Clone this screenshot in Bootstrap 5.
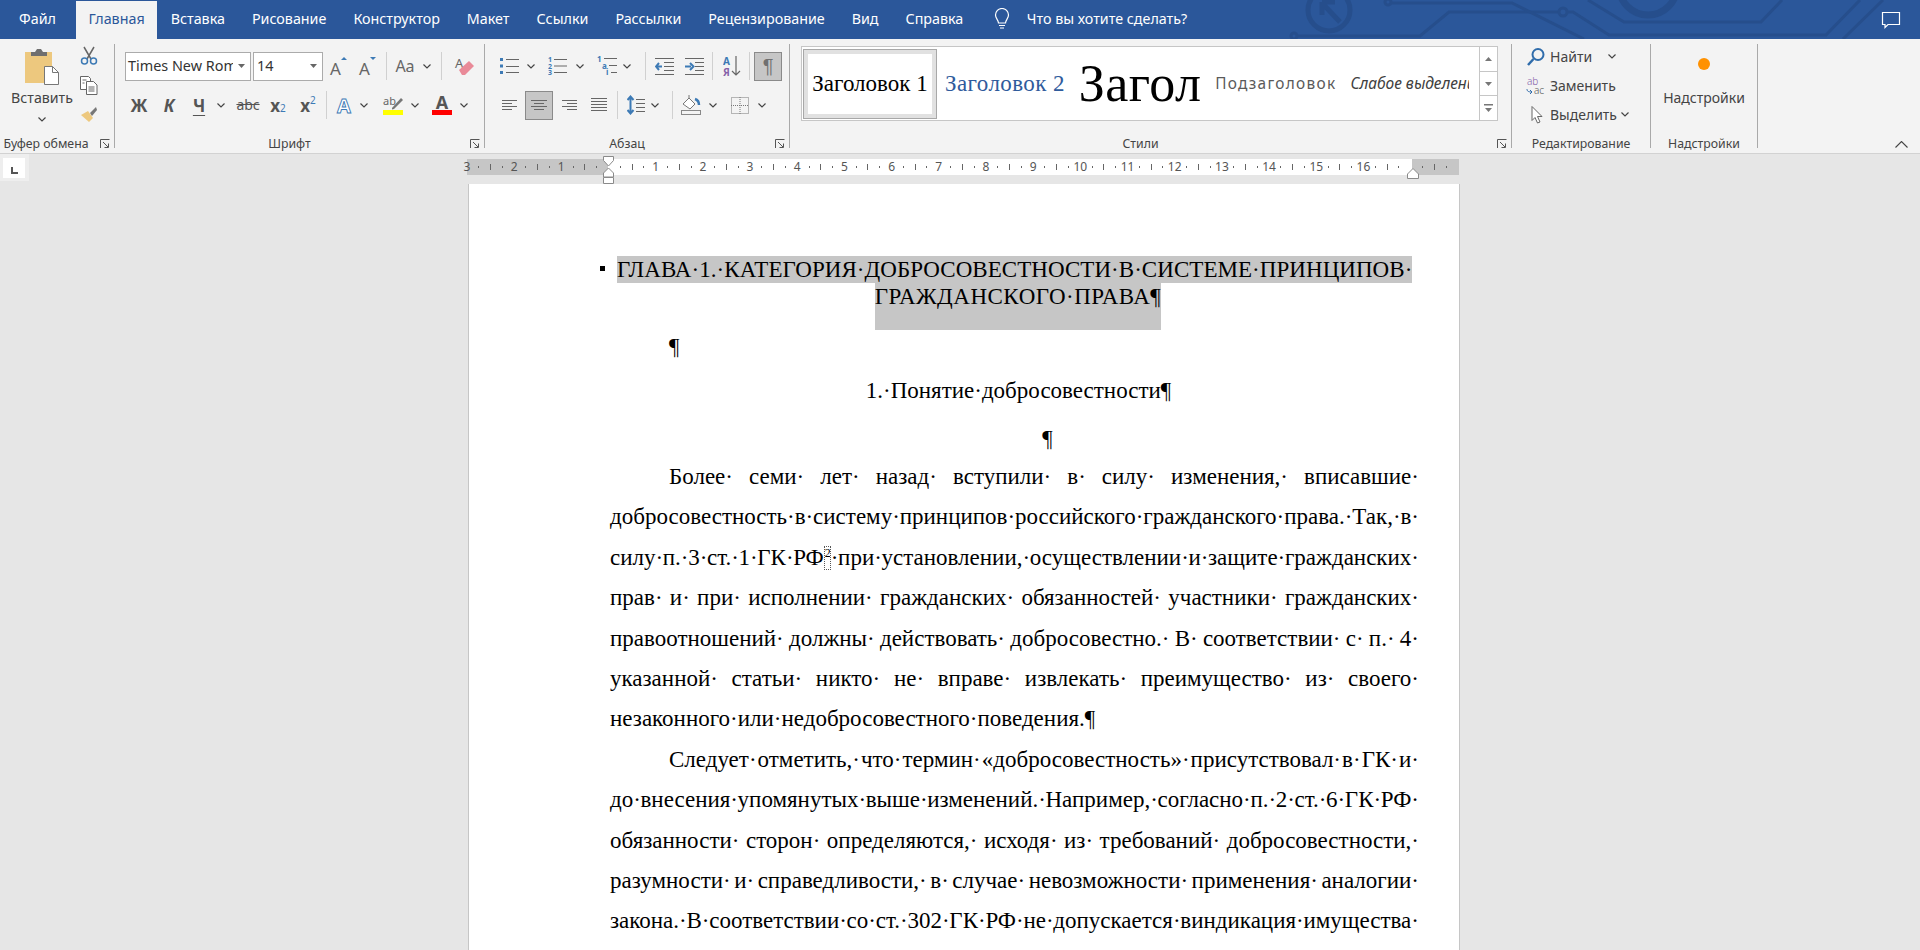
<!DOCTYPE html>
<html lang="ru">
<head>
  <meta charset="UTF-8">
  <title>Word</title>
  <link href="https://cdn.jsdelivr.net/npm/bootstrap@5.3.2/dist/css/bootstrap.min.css" rel="stylesheet">
  <style>
    html, body { height: 950px; overflow: hidden; }
    body { background: #e6e6e6; font-family: "Noto Sans", sans-serif; font-size: 12.3px; color: #444; }

    /* tabs */
    .tabbar { height: 39px; background: #2b579a; position: relative; color: #fff; font-size: 14.3px; overflow: hidden; }
    .circuit { position: absolute; left: 0; top: 0; }
    .tabbtn { position: relative; height: 38px; margin-top: 1px; padding: 0 13.5px; line-height: 36px; white-space: nowrap; }
    .tabbtn.first { padding-left: 19px; padding-right: 20px; }
    .tabbtn.on { background: #f3f3f3; color: #2b579a; padding: 0 12.5px; }
    .askbox { position: relative; line-height: 37px; white-space: nowrap; }
    .bubble { position: absolute; left: 1881px; top: 11px; }

    /* ribbon */
    .ribbon { height: 115px; background: #f3f3f3; border-bottom: 1px solid #d2d2d2; padding-top: 5px; position: relative; }
    .rgroup { height: 104px; border-right: 1px solid #a9a9a9; position: relative; flex: none; }
    .g-clip { width: 115px; } .g-font { width: 370px; } .g-para { width: 305px; }
    .g-style { width: 722px; } .g-edit { width: 139px; } .g-addin { width: 107px; }
    .rlabel { position: absolute; left: 0; right: 0; bottom: -5px; line-height: 18px; text-align: center; white-space: nowrap; }
    .rlabel.pad { padding-right: 20px; }
    .rlabel.pad-clip { padding-right: 22px; }
    .launch { position: absolute; right: 4px; top: 95px; }
    .rrow { height: 30px; display: flex; align-items: center; margin-bottom: 9px; }
    .rrows { padding-top: 7px; }
    .f-pad { padding-left: 9px; }
    .p-pad { padding-left: 9px; }
    .sl { flex: none; height: 30px; display: flex; align-items: center; justify-content: center; }
    .u1{width:1px}.u2{width:2px}.u3{width:3px}.u4{width:4px}.u5{width:5px}.u6{width:6px}.u8{width:8px}.u9{width:9px}
    .u10{width:10px}.u14{width:14px}.u16{width:16px}.u28{width:28px}.u29{width:29px}.u30{width:30px}
    .vsep { width: 1px; height: 28px; background: #d0d0d0; }
    .picked { background: #c6c6c6; border: 1px solid #8a8a8a; height: 29px; }
    .pilcrow { font-family: "Liberation Sans", sans-serif; font-size: 20px; color: #707070; }
    .combo { flex: none; height: 29px; background: #fff; border: 1px solid #ababab; display: flex; align-items: center; font-size: 14.4px; color: #333; overflow: hidden; white-space: nowrap; position: relative; }
    .combo-name { width: 126px; margin-left: 1px; margin-right: 2px; padding-left: 2px; }
    .combo-size { width: 70px; padding-left: 3px; margin-right: 1px; }
    .combo-arrow { position: absolute; right: 0; top: 0; bottom: 0; width: 17px; background: #fff; display: flex; align-items: center; justify-content: center; }
    .glyph { font-family: "Noto Sans", sans-serif; font-weight: 700; font-size: 17px; color: #555; line-height: 1; }
    .glyph.it { font-style: italic; }
    .glyph.un { text-decoration: underline; text-underline-offset: 3px; }
    .glyph sub, .glyph sup { font-size: 10px; color: #3d7ab5; font-weight: 400; }
    .strike { font-weight: 400; font-size: 14px; text-decoration: line-through; }
    .casebtn { font-size: 16px; color: #666; }

    .paste-col { width: 80px; padding-left: 4px; padding-top: 3px; text-align: center; font-size: 14.2px; white-space: nowrap; }
    .paste-col div { line-height: 18px; margin-top: 3px; }
    .small-col { width: 20px; padding-top: 2px; }
    .small-col svg { display: block; margin-bottom: 11px; }

    /* styles gallery */
    .gallery { margin: 2px 0 0 11px; width: 697px; height: 75px; background: #fff; border: 1px solid #c6c6c6; display: flex; overflow: hidden; }
    .gal-items { flex: 1; display: flex; align-items: center; min-width: 0; overflow: hidden; white-space: nowrap; }
    .gal-cur { flex: none; margin-left: 1px; width: 134px; height: 70px; border: 1px solid #a8a8a8; background: #fff; display: flex; }
    .gal-cur span { flex: 1; border: 4px solid #e1e1e1; display: flex; align-items: center; justify-content: center; font: 23px "Liberation Serif", serif; color: #000; }
    .gal-h2 { flex: none; margin-left: 8px; font: 23px "Liberation Serif", serif; color: #2f5b9c; letter-spacing: .4px; }
    .gal-h0 { flex: none; margin-left: 14px; font: 52px "Liberation Serif", serif; color: #000; letter-spacing: .4px; line-height: 1; }
    .gal-sub { flex: none; margin-left: 14px; font-size: 15.4px; color: #5a5a5a; letter-spacing: 1.3px; }
    .gal-em { flex: none; margin-left: 14px; width: 119px; overflow: hidden; font-size: 15.5px; font-style: italic; color: #404040; }
    .gal-scroll { flex: none; width: 18px; border-left: 1px solid #c6c6c6; display: flex; flex-direction: column; }
    .gal-scroll div { flex: 1; border-bottom: 1px solid #c6c6c6; display: flex; align-items: center; justify-content: center; }
    .gal-scroll div:last-child { border-bottom: 0; }

    .edit-row { height: 29px; display: flex; align-items: center; font-size: 14px; padding-left: 14px; }
    .edit-row svg.lead { flex: none; width: 20px; margin-right: 4px; }
    .edit-list { margin-top: -2px; }
    .addin-col { text-align: center; font-size: 14px; padding-top: 13px; }
    .addin-dot { filter: blur(.6px); }
    .collapse-up { position: absolute; left: 1895px; top: 102px; }

    /* ruler */
    .rulerband { height: 30px; padding-top: 5px; position: relative; }
    .rstrip { margin-left: 467px; width: 992px; height: 16px; display: flex; }
    .rdark { background: #c6c6c6; } .rlight { background: #fff; }
    .rl-a { width: 141px; } .rl-b { width: 804px; } .rl-c { width: 47px; }
    .rticks { position: absolute; left: 461px; top: 5px; height: 16px; display: flex; align-items: center; }
    .rcell { width: 11.8px; flex: none; display: flex; align-items: center; justify-content: center; font-size: 12px; color: #555; line-height: 1; }
    .rdot { width: 1px; height: 2px; background: #666; }
    .rtick { width: 1px; height: 6px; background: #666; }
    .tabstop { position: absolute; left: 0; top: 0; width: 29px; height: 27px; background: #eee; padding: 4px 3px; }
    .tabstop div { width: 22px; height: 20px; background: #fff; position: relative; }
    .mark-l { position: absolute; left: 603px; top: 2px; }
    .mark-r { position: absolute; left: 1407px; top: 14px; }

    /* document */
    .sheet { margin-left: 468px; width: 992px; height: 800px; background: #fff; border-left: 1px solid #c6c6c6; border-right: 1px solid #c6c6c6; padding: 72px 40px 0 141px; font-family: "Liberation Serif", serif; font-size: 23px; color: #000; overflow: hidden; }
    .head1 { display: flex; align-items: flex-start; margin-left: -10px; line-height: 27px; white-space: nowrap; letter-spacing: .05px; }
    .bul { width: 5px; height: 5px; background: #000; margin: 10px 12px 0 0; flex: none; }
    .hl { background: #c6c6c6; }
    .head2 { text-align: center; padding-left: 7px; line-height: 27px; height: 47px; white-space: nowrap; letter-spacing: .5px; }
    .head2 .hl { display: inline-block; padding-bottom: 20px; }
    .empty1 { height: 35px; line-height: 34px; padding-left: 59px; }
    .sect { height: 52px; line-height: 52px; text-align: center; padding-left: 8px; white-space: nowrap; }
    .empty2 { height: 40px; line-height: 44px; text-align: center; padding-left: 66px; }
    .ln { height: 40.4px; line-height: 40.4px; white-space: nowrap; }
    .jf { white-space: normal; text-align: justify; text-align-last: justify; word-spacing: -.25em; }
    .tight { word-spacing: -.4em; }
    .ind { padding-left: 59px; }
    .fnref { display: inline-block; width: 7px; height: 24px; line-height: 13px; border: 1px dotted #555; font-size: 12px; text-align: center; vertical-align: -5px; overflow: hidden; word-spacing: 0; }
  </style>
</head>
<body>

  <div class="tabbar d-flex align-items-start">
    <svg class="circuit" width="1920" height="39" fill="none" stroke="#264e8c" stroke-width="3">
      <circle cx="1329" cy="10" r="21" stroke-width="5"/>
      <path d="M1322 3l18 19M1322 2v13M1322 2h13" stroke-width="5"/>
      <circle cx="1294" cy="36" r="3"/>
      <path d="M1297 36h123l29-24h110"/>
      <circle cx="1563" cy="12" r="4"/>
      <path d="M1567 12h6l36 23h217l34-35"/>
      <circle cx="1388" cy="2" r="3"/>
      <path d="M1391 3h121l72 36"/>
      <path d="M1588 0l36 22h137l21-22"/>
      <path d="M1843 39l40-39"/>
      <circle cx="1648" cy="-14" r="29" stroke-width="7"/>
    </svg>
    <div class="tabbtn first">Файл</div>
    <div class="tabbtn on">Главная</div>
    <div class="tabbtn">Вставка</div>
    <div class="tabbtn">Рисование</div>
    <div class="tabbtn">Конструктор</div>
    <div class="tabbtn">Макет</div>
    <div class="tabbtn">Ссылки</div>
    <div class="tabbtn">Рассылки</div>
    <div class="tabbtn">Рецензирование</div>
    <div class="tabbtn">Вид</div>
    <div class="tabbtn">Справка</div>
    <svg class="ms-3 position-relative mt-2" width="18" height="22" viewBox="0 0 18 22" fill="none" stroke="#fff" stroke-width="1.2"><path d="M5.5 15c0-3-3-4.500-3-8a6.500 6.500 0 0 1 13 0c0 3.500-3 5-3 8z"/><path d="M6 17.500h6M7 20h4"/></svg>
    <div class="askbox ms-3">Что вы хотите сделать?</div>
    <svg class="bubble" width="20" height="19" viewBox="0 0 20 19" fill="none" stroke="#fff" stroke-width="1.2"><path d="M1.500 1.500h17v12H7l-3 3v-3H1.500z"/></svg>
  </div>

  <div class="ribbon d-flex">
    <!-- Буфер обмена -->
    <div class="rgroup g-clip d-flex">
      <div class="paste-col">
        <svg width="36" height="39" viewBox="0 0 36 39"><rect x="1" y="5" width="27" height="31" fill="#edc87e"/><path d="M7 9V5h4l2-3h4l2 3h4v4z" fill="#6f6f6f"/><path d="M20.500 19.500h8l6 6v12h-14z" fill="#fff" stroke="#777"/><path d="M28.500 19.500v6h6" fill="none" stroke="#777"/></svg>
        <div>Вставить</div>
        <svg width="8" height="5" viewBox="0 0 8 5" fill="none" stroke="#444" stroke-width="1.200"><path d="M.5.500l3.500 3.500L7.500.500"/></svg>
      </div>
      <div class="small-col">
        <svg width="18" height="19" viewBox="0 0 18 19" fill="none"><path d="M4 1l7 12M14 1L7 13" stroke="#666" stroke-width="1.500"/><circle cx="4.500" cy="15" r="3" stroke="#3d7ab5" stroke-width="1.500"/><circle cx="13.500" cy="15" r="3" stroke="#3d7ab5" stroke-width="1.500"/></svg>
        <svg width="18" height="19" viewBox="0 0 18 19" fill="#fff" stroke="#666"><path d="M.5.500h8l2 2v11H.5z"/><path d="M6.500 5.500h7l3.500 3.500v9.500H6.500z"/><path d="M2.500 4h4M2.500 7h2M8.500 11h6M8.500 13h6M8.500 15h6" stroke="#666"/></svg>
        <svg width="18" height="17" viewBox="0 0 18 17"><path d="M1 9l7-4 5 7-4 4z" fill="#edc87e"/><path d="M10 7l6-6 1 3-5 6z" fill="#777"/></svg>
      </div>
      <svg class="launch" width="10" height="10" viewBox="0 0 10 10" fill="none" stroke="#555"><path d="M.5 9V.5H9.500M3 3l5 5M8.500 4.500v4h-4"/></svg>
      <div class="rlabel pad-clip">Буфер обмена</div>
    </div>

    <!-- Шрифт -->
    <div class="rgroup g-font">
      <div class="rrows f-pad">
        <div class="rrow">
          <div class="combo combo-name">Times New Roman<span class="combo-arrow"><svg width="7" height="4"><path d="M0 0h7L3.500 4z" fill="#666"/></svg></span></div>
          <div class="combo combo-size">14<span class="combo-arrow"><svg width="7" height="4"><path d="M0 0h7L3.500 4z" fill="#666"/></svg></span></div>
          <div class="sl u29"><svg width="22" height="24" viewBox="0 0 22 24"><text x="2" y="21" font-family="Noto Sans" font-size="17" fill="#666">A</text><path d="M13 6h6l-3-3z" fill="#3d7ab5"/></svg></div>
          <div class="sl u29"><svg width="22" height="24" viewBox="0 0 22 24"><text x="2" y="21" font-family="Noto Sans" font-size="17" fill="#666">A</text><path d="M13 3h6l-3 3z" fill="#3d7ab5"/></svg></div>
          <div class="sl u8"><div class="vsep"></div></div>
          <div class="sl u30 casebtn">Aa</div>
          <div class="sl u14"><svg width="8" height="5" fill="none" stroke="#444" stroke-width="1.200"><path d="M.5.500l3.500 3.500L7.500.500"/></svg></div>
          <div class="sl u3"></div>
          <div class="sl u8"><div class="vsep"></div></div>
          <div class="sl u4"></div>
          <div class="sl u30"><svg width="24" height="24" viewBox="0 0 24 24"><text x="3" y="14" font-family="Noto Sans" font-size="13" fill="#666">A</text><path d="M7 16l10-9 5 5-9 9h-3z" fill="#e98a98"/></svg></div>
        </div>
        <div class="rrow">
          <div class="sl u30 glyph">Ж</div>
          <div class="sl u30 glyph it">К</div>
          <div class="sl u30 glyph un">Ч</div>
          <div class="sl u14"><svg width="8" height="5" fill="none" stroke="#444" stroke-width="1.200"><path d="M.5.500l3.500 3.500L7.500.500"/></svg></div>
          <div class="sl u5"></div>
          <div class="sl u30 glyph strike">abc</div>
          <div class="sl u30 glyph">x<sub>2</sub></div>
          <div class="sl u30 glyph">x<sup>2</sup></div>
          <div class="sl u6"><div class="vsep"></div></div>
          <div class="sl u30"><svg width="24" height="24" viewBox="0 0 24 24"><text x="12" y="20" text-anchor="middle" font-family="Noto Sans" font-weight="700" font-size="20" fill="#fff" stroke="#3d7ab5" stroke-width=".9">A</text></svg></div>
          <div class="sl u10"><svg width="8" height="5" fill="none" stroke="#444" stroke-width="1.200"><path d="M.5.500l3.500 3.500L7.500.500"/></svg></div>
          <div class="sl u9"></div>
          <div class="sl u30"><svg width="24" height="22" viewBox="0 0 24 22"><text x="2" y="11" font-family="Noto Sans" font-size="11" fill="#666">ab</text><path d="M11 14l9-10 2 2-9 9-2 .5z" fill="#777"/><rect x="2" y="16" width="20" height="5" fill="#ff0"/></svg></div>
          <div class="sl u14"><svg width="8" height="5" fill="none" stroke="#444" stroke-width="1.200"><path d="M.5.500l3.500 3.500L7.500.500"/></svg></div>
          <div class="sl u5"></div>
          <div class="sl u30"><svg width="24" height="22" viewBox="0 0 24 22"><text x="12" y="15" text-anchor="middle" font-family="Noto Sans" font-weight="700" font-size="18" fill="#555">A</text><rect x="2" y="16" width="20" height="5" fill="#f00"/></svg></div>
          <div class="sl u14"><svg width="8" height="5" fill="none" stroke="#444" stroke-width="1.200"><path d="M.5.500l3.500 3.500L7.500.500"/></svg></div>
        </div>
      </div>
      <svg class="launch" width="10" height="10" viewBox="0 0 10 10" fill="none" stroke="#555"><path d="M.5 9V.5H9.500M3 3l5 5M8.500 4.500v4h-4"/></svg>
      <div class="rlabel pad">Шрифт</div>
    </div>

    <!-- Абзац -->
    <div class="rgroup g-para">
      <div class="rrows p-pad">
        <div class="rrow">
          <div class="sl u30"><svg width="19" height="18" viewBox="0 0 19 18" fill="none" stroke="#666"><path d="M6 2.500h13M6 9.500h13M6 15.500h13"/><g fill="#3d7ab5" stroke="none"><rect x="0" y="1" width="3" height="3"/><rect x="0" y="7.500" width="3" height="3"/><rect x="0" y="14" width="3" height="3"/></g></svg></div>
          <div class="sl u14"><svg width="8" height="5" fill="none" stroke="#444" stroke-width="1.200"><path d="M.5.500l3.500 3.500L7.500.500"/></svg></div>
          <div class="sl u4"></div>
          <div class="sl u30"><svg width="19" height="20" viewBox="0 0 19 20" fill="none" stroke="#666"><path d="M6 3.500h13M6 10h13M6 16.500h13"/><g font-family="Noto Sans" font-size="7" font-weight="700" fill="#3d7ab5" stroke="none"><text x="0" y="6">1</text><text x="0" y="12.500">2</text><text x="0" y="19">3</text></g></svg></div>
          <div class="sl u16"><svg width="8" height="5" fill="none" stroke="#444" stroke-width="1.200"><path d="M.5.500l3.500 3.500L7.500.500"/></svg></div>
          <div class="sl u4"></div>
          <div class="sl u30"><svg width="20" height="20" viewBox="0 0 20 20" fill="none" stroke="#666"><path d="M7 2.500h13M12 9.500h8M14 16.500h6"/><g font-family="Noto Sans" font-size="8" font-weight="700" fill="#3d7ab5" stroke="none"><text x="0" y="6">1</text><text x="5" y="12.500">a</text><text x="9" y="19">i</text></g></svg></div>
          <div class="sl u10"><svg width="8" height="5" fill="none" stroke="#444" stroke-width="1.200"><path d="M.5.500l3.500 3.500L7.500.500"/></svg></div>
          <div class="sl u9"></div>
          <div class="sl u8"><div class="vsep"></div></div>
          <div class="sl u30"><svg width="19" height="17" viewBox="0 0 19 17" fill="none" stroke="#666"><path d="M0 .5h19M9 4.500h10M9 8.500h10M9 12.500h10M0 16.500h19"/><path d="M7 8.500H1M4 5L1 8.500 4 12" stroke="#3d7ab5" stroke-width="2"/></svg></div>
          <div class="sl u30"><svg width="19" height="17" viewBox="0 0 19 17" fill="none" stroke="#666"><path d="M0 .5h19M10 4.500h9M10 8.500h9M10 12.500h9M0 16.500h19"/><path d="M0 8.500h6M5 5l3.500 3.500L5 12" stroke="#3d7ab5" stroke-width="2"/></svg></div>
          <div class="sl u6"><div class="vsep"></div></div>
          <div class="sl u2"></div>
          <div class="sl u30"><svg width="18" height="22" viewBox="0 0 18 22"><text x="0" y="10" font-family="Noto Sans" font-size="10" font-weight="700" fill="#3d7ab5">A</text><text x="0" y="21" font-family="Noto Sans" font-size="10" font-weight="700" fill="#8560a8">Я</text><path d="M13 1v19M9 16l4 4 4-4" fill="none" stroke="#666" stroke-width="1.200"/></svg></div>
          <div class="sl u4"><div class="vsep"></div></div>
          <div class="sl u3"></div>
          <div class="sl u28 picked"><span class="pilcrow">¶</span></div>
        </div>
        <div class="rrow">
          <div class="sl u30"><svg width="15" height="11" fill="none" stroke="#666"><path d="M0 .5h15M0 3.500h10M0 6.500h15M0 9.500h10"/></svg></div>
          <div class="sl u1"></div>
          <div class="sl u28 picked"><svg width="16" height="11" fill="none" stroke="#666"><path d="M0 .5h16M3 3.500h10M0 6.500h16M3 9.500h10"/></svg></div>
          <div class="sl u1"></div>
          <div class="sl u30"><svg width="15" height="11" fill="none" stroke="#666"><path d="M0 .5h15M5 3.500h10M0 6.500h15M5 9.500h10"/></svg></div>
          <div class="sl u30"><svg width="16" height="14" fill="none" stroke="#666"><path d="M0 .5h16M0 3.500h16M0 6.500h16M0 9.500h16M0 12.500h16"/></svg></div>
          <div class="sl u6"><div class="vsep"></div></div>
          <div class="sl u2"></div>
          <div class="sl u28"><svg width="18" height="20" viewBox="0 0 18 20" fill="none"><path d="M9 4.500h9M9 8.500h9M9 12.500h9M9 16.500h9" stroke="#666"/><path d="M3.500 2v16M.5 5l3-3.500 3 3.500M.5 15l3 3.500 3-3.500" stroke="#3d7ab5" stroke-width="2"/></svg></div>
          <div class="sl u10"><svg width="8" height="5" fill="none" stroke="#444" stroke-width="1.200"><path d="M.5.500l3.500 3.500L7.500.500"/></svg></div>
          <div class="sl u8"></div>
          <div class="sl u8"><div class="vsep"></div></div>
          <div class="sl u1"></div>
          <div class="sl u28"><svg width="20" height="20" viewBox="0 0 20 20" fill="none"><path d="M2 9l6-6 6 6-5 5z" fill="#fff" stroke="#777"/><path d="M8 3V0" stroke="#777"/><path d="M14 4c3 1 4 3 4 6" stroke="#3d7ab5" stroke-width="2.500"/><rect x=".5" y="15.500" width="19" height="4" fill="#f3f3f3" stroke="#888"/></svg></div>
          <div class="sl u3"></div>
          <div class="sl u10"><svg width="8" height="5" fill="none" stroke="#444" stroke-width="1.200"><path d="M.5.500l3.500 3.500L7.500.500"/></svg></div>
          <div class="sl u8"></div>
          <div class="sl u28"><svg width="18" height="17" viewBox="0 0 18 17" fill="none" stroke="#777" stroke-dasharray="1 1"><rect x=".5" y=".5" width="17" height="16"/><path d="M9 0v17M0 8.500h18"/></svg></div>
          <div class="sl u3"></div>
          <div class="sl u10"><svg width="8" height="5" fill="none" stroke="#444" stroke-width="1.200"><path d="M.5.500l3.500 3.500L7.500.500"/></svg></div>
        </div>
      </div>
      <svg class="launch" width="10" height="10" viewBox="0 0 10 10" fill="none" stroke="#555"><path d="M.5 9V.5H9.500M3 3l5 5M8.500 4.500v4h-4"/></svg>
      <div class="rlabel pad">Абзац</div>
    </div>

    <!-- Стили -->
    <div class="rgroup g-style">
      <div class="gallery">
        <div class="gal-items">
          <div class="gal-cur"><span>Заголовок 1</span></div>
          <div class="gal-h2">Заголовок 2</div>
          <div class="gal-h0">Загол</div>
          <div class="gal-sub">Подзаголовок</div>
          <div class="gal-em">Слабое выделение</div>
        </div>
        <div class="gal-scroll">
          <div><svg width="7" height="4"><path d="M0 4h7L3.500 0z" fill="#777"/></svg></div>
          <div><svg width="7" height="4"><path d="M0 0h7L3.500 4z" fill="#777"/></svg></div>
          <div><svg width="9" height="9" fill="#777"><rect width="9" height="1.500"/><path d="M1 4h7L4.500 8z"/></svg></div>
        </div>
      </div>
      <svg class="launch" width="10" height="10" viewBox="0 0 10 10" fill="none" stroke="#555"><path d="M.5 9V.5H9.500M3 3l5 5M8.500 4.500v4h-4"/></svg>
      <div class="rlabel pad">Стили</div>
    </div>

    <!-- Редактирование -->
    <div class="rgroup g-edit">
      <div class="edit-list">
        <div class="edit-row">
          <svg class="lead" width="20" height="20" viewBox="0 0 20 20" fill="none" stroke="#2f6cab"><circle cx="12" cy="7.500" r="5.500" stroke-width="2"/><path d="M7.500 12L2 18" stroke-width="2.500"/></svg>
          <span>Найти</span>
          <svg class="ms-3" width="8" height="5" fill="none" stroke="#444" stroke-width="1.200"><path d="M.5.500l3.500 3.500L7.500.500"/></svg>
        </div>
        <div class="edit-row">
          <svg class="lead" width="20" height="20" viewBox="0 0 20 20"><text x="1" y="9" font-family="Noto Sans" font-size="10" fill="#8560a8">ab</text><text x="8" y="18" font-family="Noto Sans" font-size="10" fill="#555">ac</text><path d="M1 13c0 2 1 3 5 3M4 14l2 2-2 2" fill="none" stroke="#2f6cab"/></svg>
          <span>Заменить</span>
        </div>
        <div class="edit-row">
          <svg class="lead" width="20" height="20" viewBox="0 0 20 20" fill="#fff" stroke="#666"><path d="M6 1.500v14l3-3 2.500 5.500 2.500-1-2.500-5.500H16z"/></svg>
          <span>Выделить</span>
          <svg class="ms-1" width="8" height="5" fill="none" stroke="#444" stroke-width="1.200"><path d="M.5.500l3.500 3.500L7.500.500"/></svg>
        </div>
      </div>
      <div class="rlabel">Редактирование</div>
    </div>

    <!-- Надстройки -->
    <div class="rgroup g-addin">
      <div class="addin-col">
        <svg class="addin-dot d-block mx-auto" width="14" height="14"><circle cx="7" cy="7" r="6" fill="#ff9100"/></svg>
        <div class="mt-3">Надстройки</div>
      </div>
      <div class="rlabel">Надстройки</div>
    </div>

    <svg class="collapse-up" width="13" height="7" fill="none" stroke="#444" stroke-width="1.100"><path d="M.5 6.500l6-6 6 6"/></svg>
  </div>

  <div class="rulerband">
    <div class="tabstop"><div><svg class="d-block" width="22" height="20"><path d="M8 9h2v5h5v2H8z" fill="#555"/></svg></div></div>
    <div class="rstrip">
      <div class="rdark rl-a"></div>
      <div class="rlight rl-b"></div>
      <div class="rdark rl-c"></div>
    </div>
    <div class="rticks" id="ticks"></div>
    <svg class="mark-l" width="11" height="28" viewBox="0 0 11 28" fill="#fff" stroke="#8a8a8a"><path d="M.5.500h10v4L5.500 10 .5 4.500z"/><path d="M5.500 12l5 5v4H.5v-4z"/><path d="M.5 21.500h10v6H.5z"/></svg>
    <svg class="mark-r" width="12" height="11" viewBox="0 0 12 11" fill="#fff" stroke="#8a8a8a"><path d="M6 .5l5.500 5.500v4.500H.5V6z"/></svg>
  </div>

  <div class="sheet">
    <div class="head1"><span class="bul"></span><span class="hl">ГЛАВА·1.·КАТЕГОРИЯ·ДОБРОСОВЕСТНОСТИ·В·СИСТЕМЕ·ПРИНЦИПОВ·</span></div>
    <div class="head2"><span class="hl">ГРАЖДАНСКОГО·ПРАВА¶</span></div>
    <div class="empty1">¶</div>
    <div class="sect">1.·Понятие·добросовестности¶</div>
    <div class="empty2">¶</div>
    <div class="ln jf ind">Более· семи· лет· назад· вступили· в· силу· изменения,· вписавшие·</div>
    <div class="ln jf tight">добросовестность· в· систему· принципов· российского· гражданского· права.· Так,· в·</div>
    <div class="ln jf tight">силу· п.· 3· ст.· 1· ГК· РФ<span class="fnref">2</span>· при· установлении,· осуществлении· и· защите· гражданских·</div>
    <div class="ln jf">прав· и· при· исполнении· гражданских· обязанностей· участники· гражданских·</div>
    <div class="ln jf">правоотношений· должны· действовать· добросовестно.· В· соответствии· с· п.· 4·</div>
    <div class="ln jf">указанной· статьи· никто· не· вправе· извлекать· преимущество· из· своего·</div>
    <div class="ln">незаконного·или·недобросовестного·поведения.¶</div>
    <div class="ln jf tight ind">Следует· отметить,· что· термин· «добросовестность»· присутствовал· в· ГК· и·</div>
    <div class="ln jf tight">до· внесения· упомянутых· выше· изменений.· Например,· согласно· п.· 2· ст.· 6· ГК· РФ·</div>
    <div class="ln jf">обязанности· сторон· определяются,· исходя· из· требований· добросовестности,·</div>
    <div class="ln jf">разумности· и· справедливости,· в· случае· невозможности· применения· аналогии·</div>
    <div class="ln jf tight">закона.· В· соответствии· со· ст.· 302· ГК· РФ· не· допускается· виндикация· имущества·</div>
  </div>

  <script src="https://cdn.jsdelivr.net/npm/bootstrap@5.3.2/dist/js/bootstrap.bundle.min.js"></script>
  <script>
    // ruler: number, dot, tick, dot for every centimetre
    const ticks = document.getElementById('ticks');
    for (let n = -3; n <= 17; n++) {
      const label = (n === 0 || n === 17) ? '' : Math.abs(n);
      ticks.innerHTML += `<div class="rcell">${label}</div>`
        + '<div class="rcell"><div class="rdot"></div></div>'
        + '<div class="rcell"><div class="rtick"></div></div>'
        + '<div class="rcell"><div class="rdot"></div></div>';
    }
  </script>
</body>
</html>
